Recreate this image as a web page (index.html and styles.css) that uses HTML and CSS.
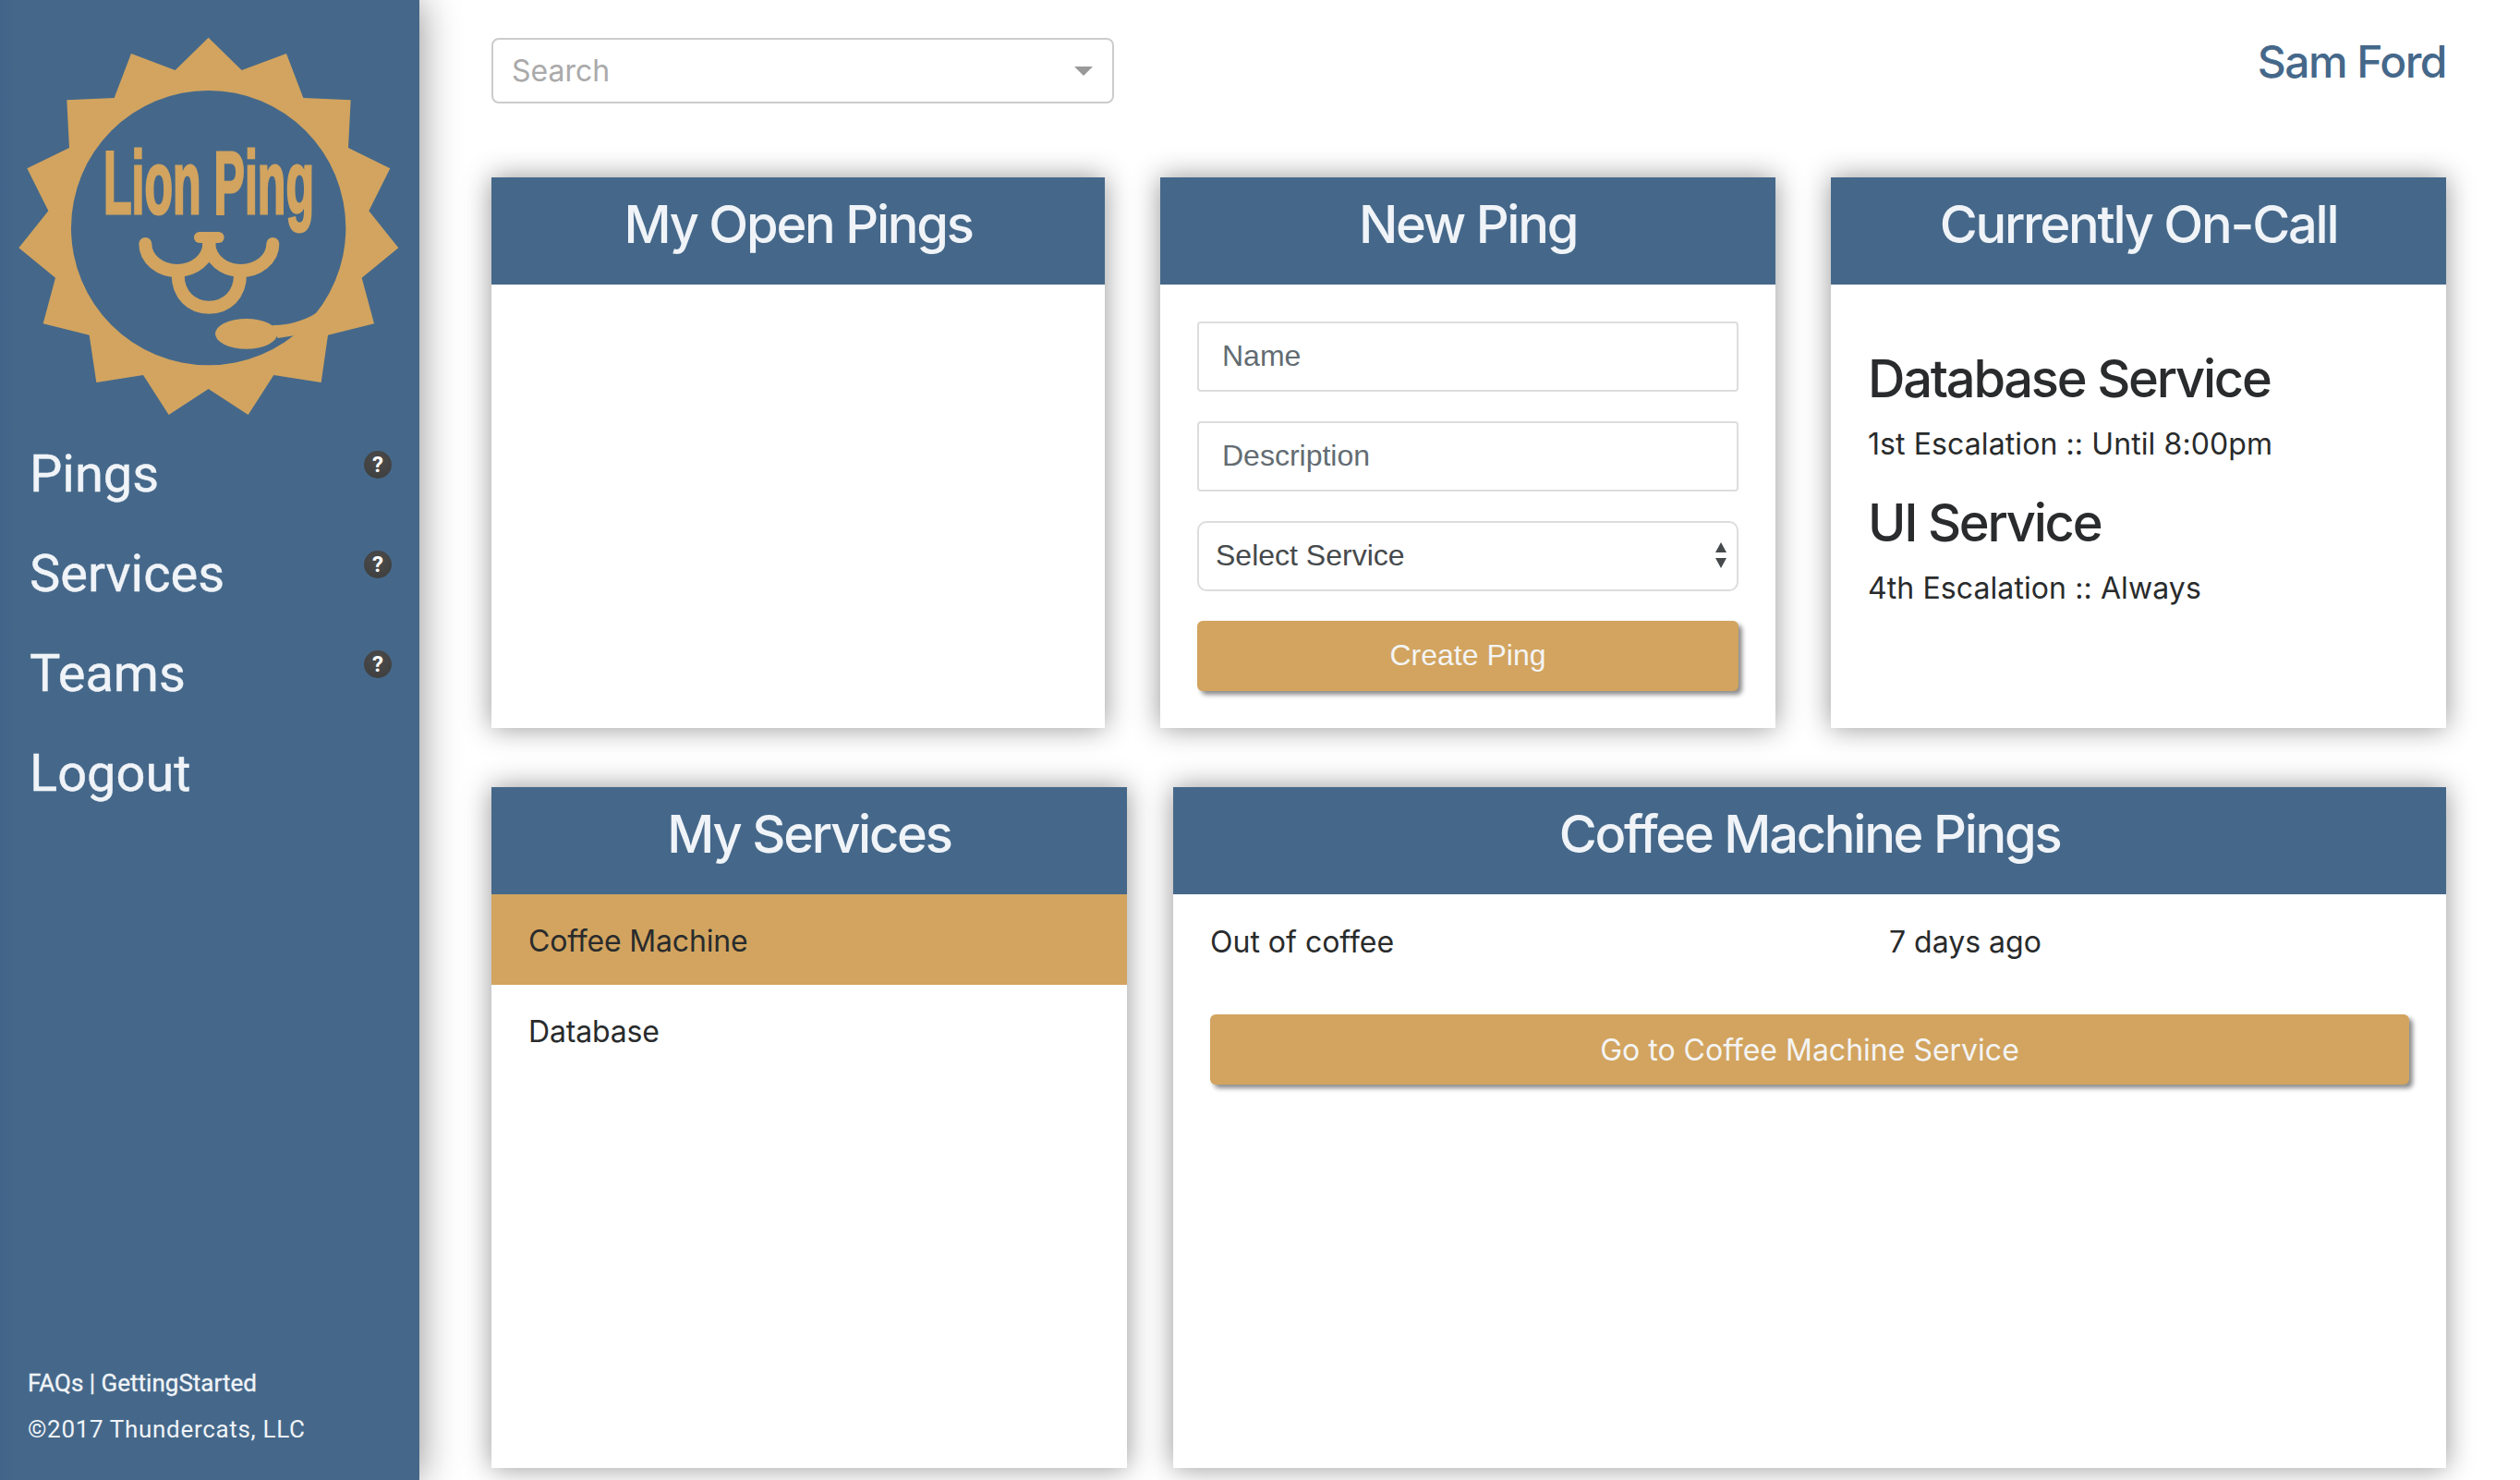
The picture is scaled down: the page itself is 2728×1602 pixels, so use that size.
FILE: index.html
```html
<!DOCTYPE html>
<html lang="en">
<head>
<meta charset="utf-8">
<title>Lion Ping</title>
<link rel="stylesheet" href="styles.css">
</head>
<body>
<div class="app">
  <aside class="sidebar">
    <svg class="logo" viewBox="0 0 1362 1377" aria-label="Lion Ping logo">
      <polygon class="logo-gold" points="677,122 785,228 930,174 985,318 1139,325 1131,480 1267,547 1198,685 1294,805 1175,902 1215,1051 1065,1088 1043,1242 889,1218 806,1347 677,1263 548,1347 465,1218 313,1242 290,1088 140,1051 180,902 61,805 157,685 88,547 225,480 217,325 371,318 426,174 569,228"/>
      <circle class="logo-blue" cx="677" cy="740" r="446"/>
      <path class="logo-gold" d="M885 1056 C 930 1058 990 1042 1030 1014 L 1060 1040 L 955 1090 L 902 1098 Z"/>
      <ellipse class="logo-gold" cx="800" cy="1084" rx="101" ry="49"/>
      <text class="logo-text" transform="translate(336 692) scale(.518 1)">Lion Ping</text>
      <path class="logo-line logo-nose" d="M648 771 H710"/>
      <path class="logo-line" d="M472 792 C 472 842 520 879 575 879 C 630 879 679 842 679 790"/>
      <path class="logo-line" d="M886 792 C 886 842 838 879 783 879 C 728 879 679 842 679 790"/>
      <path class="logo-line" d="M578 892 C 578 958 622 998 679 998 C 736 998 780 958 780 892"/>
    </svg>
    <nav class="nav">
      <a class="nav-item"><span>Pings</span><span class="help">?</span></a>
      <a class="nav-item"><span>Services</span><span class="help">?</span></a>
      <a class="nav-item"><span>Teams</span><span class="help">?</span></a>
      <a class="nav-item"><span>Logout</span></a>
    </nav>
    <footer class="side-footer">
      <div class="footer-links">FAQs | GettingStarted</div>
      <div>©2017 Thundercats, LLC</div>
    </footer>
  </aside>
  <main class="main">
    <header class="topbar">
      <div class="search">
        <span>Search</span>
        <span class="search-caret"></span>
      </div>
      <div class="user">Sam Ford</div>
    </header>
    <section class="row-three">
      <article class="card">
        <h2 class="card-title">My Open Pings</h2>
      </article>
      <article class="card">
        <h2 class="card-title">New Ping</h2>
        <div class="form">
          <div class="field">Name</div>
          <div class="field">Description</div>
          <div class="field field-select">
            <span>Select Service</span>
            <svg class="updown" viewBox="0 0 12 28"><path d="M6 0 L12 11 H0 Z M0 17 H12 L6 28 Z"/></svg>
          </div>
          <div class="btn btn-form">Create Ping</div>
        </div>
      </article>
      <article class="card">
        <h2 class="card-title">Currently On-Call</h2>
        <div class="oncall">
          <h3 class="service">Database Service</h3>
          <p class="escalation">1st Escalation :: Until 8:00pm</p>
          <h3 class="service service-next">UI Service</h3>
          <p class="escalation">4th Escalation :: Always</p>
        </div>
      </article>
    </section>
    <section class="row-two">
      <article class="card">
        <h2 class="card-title">My Services</h2>
        <ul class="list">
          <li class="list-item active">Coffee Machine</li>
          <li class="list-item">Database</li>
        </ul>
      </article>
      <article class="card">
        <h2 class="card-title">Coffee Machine Pings</h2>
        <div class="detail">
          <div class="ping-row"><span>Out of coffee</span><span>7 days ago</span></div>
          <div class="btn btn-wide">Go to Coffee Machine Service</div>
        </div>
      </article>
    </section>
  </main>
</div>
</body>
</html>
```

FILE: styles.css
```css
* { box-sizing: border-box; }
html, body { margin: 0; height: 100%; overflow: hidden; background: #fff; }
body { font-family: Inter, Roboto, "Liberation Sans", sans-serif; color: #292b2c; }

.app { display: flex; height: 1602px; }

.sidebar {
  flex: 0 0 454px;
  display: flex;
  flex-direction: column;
  position: relative;
  z-index: 2;
  font-family: Roboto, sans-serif;
  color: #f0f4f8;
  background: linear-gradient(90deg, #42648a 0, #45688a 22px);
  box-shadow: 0 0 40px rgba(0, 0, 0, .45);
}
.logo { display: block; width: 454px; height: 459px; flex: none; }
.logo-gold { fill: #d2a45f; }
.logo-blue { fill: #45688a; }
.logo-text {
  fill: #d2a45f;
  stroke: #d2a45f;
  stroke-width: 9px;
  font-family: "Liberation Sans", sans-serif;
  font-weight: 700;
  font-size: 290px;
}
.logo-line { fill: none; stroke: #d2a45f; stroke-width: 42px; stroke-linecap: round; }
.logo-nose { stroke-width: 36px; }

.nav { display: flex; flex-direction: column; }
.nav-item {
  display: flex;
  justify-content: space-between;
  height: 108px;
  padding: 0 30px 0 32px;
  font-size: 56px;
  line-height: 108px;
  -webkit-text-stroke: .4px #f0f4f8;
}
.help {
  width: 30px;
  height: 30px;
  margin-top: 29px;
  border-radius: 50%;
  background: radial-gradient(circle at 50% 35%, #4c4c4c, #3c3c3c);
  color: #fff;
  font-size: 24px;
  font-weight: 700;
  line-height: 30px;
  text-align: center;
  -webkit-text-stroke: 0;
}

.side-footer {
  margin-top: auto;
  padding: 0 0 30px 30px;
  font-size: 26px;
  line-height: 50px;
  letter-spacing: .026em;
}
.footer-links { letter-spacing: 0; -webkit-text-stroke: .3px #f0f4f8; }

.main { flex: 1; padding: 41px 80px 0 78px; }

.topbar {
  display: flex;
  justify-content: space-between;
  align-items: flex-start;
  height: 151px;
}
.search {
  display: flex;
  justify-content: space-between;
  align-items: center;
  width: 674px;
  height: 71px;
  padding: 0 21px 0 20px;
  border: 2px solid #ccc;
  border-radius: 8px;
  color: #aaa;
  font-size: 32px;
}
.search-caret {
  width: 0;
  height: 0;
  border-left: 10px solid transparent;
  border-right: 10px solid transparent;
  border-top: 10px solid #999;
}
.user { color: #45688a; font-size: 48px; font-weight: 500; line-height: 51px; letter-spacing: -.032em; }

.row-three { display: grid; grid-template-columns: 664px 666px 666px; gap: 60px; height: 596px; }
.row-two { display: grid; grid-template-columns: 688px 1fr; gap: 50px; height: 737px; margin-top: 64px; }

.card { background: #fff; box-shadow: 0 0 28px rgba(0, 0, 0, .42); }
.card-title {
  height: 116px;
  margin: 0;
  background: #45688a;
  color: #f0f4f8;
  font-size: 56px;
  font-weight: 500;
  line-height: 102px;
  letter-spacing: -.04em;
  text-align: center;
}

.form { display: flex; flex-direction: column; gap: 32px; padding: 40px; }
.field {
  display: flex;
  align-items: center;
  height: 76px;
  padding: 0 25px 2px;
  border: 2px solid #ddd;
  border-radius: 4px;
  color: #636c72;
  font-family: "Liberation Sans", sans-serif;
  font-size: 32px;
}
.field-select {
  justify-content: space-between;
  padding: 0 10px 2px 18px;
  border-radius: 10px;
  color: #464a4c;
}
.updown { width: 14px; height: 28px; fill: #464a4c; }

.btn {
  height: 76px;
  border-radius: 6px;
  background: #d2a45f;
  color: #f4f4f4;
  font-size: 32px;
  line-height: 74px;
  text-align: center;
  box-shadow: 4px 4px 5px rgba(0, 0, 0, .45);
}
.btn-form { font-family: "Liberation Sans", sans-serif; }
.btn-wide { line-height: 77px; }

.oncall { padding: 69px 40px 0 40px; }
.service { margin: 0; font-size: 56px; font-weight: 500; line-height: 66px; letter-spacing: -.04em; }
.service-next { margin-top: 28px; }
.escalation { margin: 14px 0 0; font-size: 32px; line-height: 48px; letter-spacing: .003em; }

.list { margin: 0; padding: 0; list-style: none; }
.list-item {
  height: 98px;
  padding: 4px 40px 0;
  font-size: 32px;
  line-height: 94px;
  letter-spacing: -.005em;
}
.active { background: #d2a45f; }

.detail { padding: 28px 40px 0; }
.ping-row {
  display: grid;
  grid-template-columns: 735px 1fr;
  margin-bottom: 54px;
  font-size: 32px;
  line-height: 48px;
}
```
